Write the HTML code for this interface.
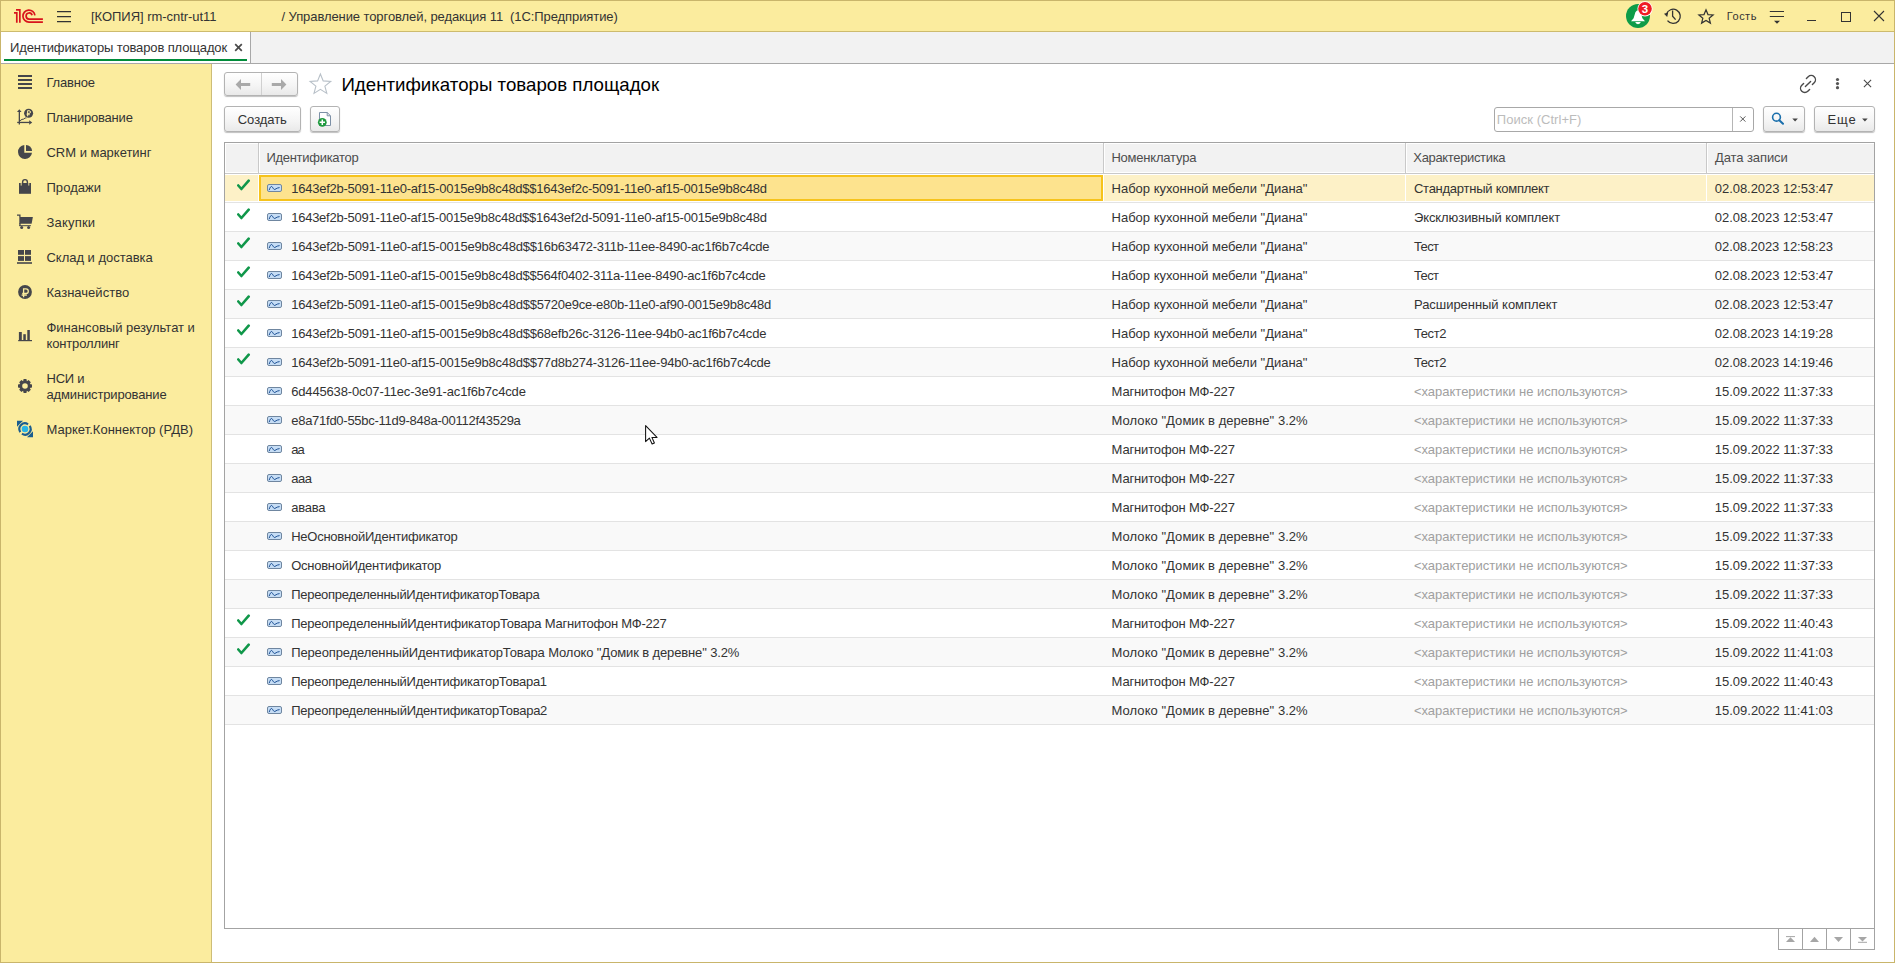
<!DOCTYPE html>
<html><head><meta charset="utf-8">
<style>
*{box-sizing:border-box}
html,body{margin:0;padding:0}
body{width:1895px;height:963px;overflow:hidden;position:relative;background:#fff;font-family:"Liberation Sans",sans-serif}
div,svg{position:absolute}
.tx{white-space:pre}
.gr{color:#a3a3a3}
.sb{font-size:13px;line-height:16px;color:#404040;white-space:pre;left:47px}
.rowline{left:225px;width:1649px;height:1px;background:#e3e3e3}
.rowbg{left:225px;width:1649px;height:28px}
.chk{left:237px}
.ric{left:267px}
.btn{border:1px solid #b3b3b3;border-radius:3px;background:linear-gradient(#ffffff,#f4f4f4 60%,#e9e9e9);box-shadow:0 1px 1px rgba(0,0,0,0.25)}
.hdr{top:144px;height:28px;background:#f2f2f2}
.vsep{top:143px;width:1px;height:31px;background:#c9c9c9}
</style></head><body>
<!-- top bar -->
<div style="left:0;top:0;width:1895px;height:32px;background:#fbec9e"></div>
<div style="left:0;top:31px;width:1895px;height:1px;background:#cdbb6e"></div>
<svg style="left:0;top:0" width="50" height="31" viewBox="0 0 50 31">
 <g fill="none" stroke="#d8141c" stroke-width="1.7">
  <path d="M16 9.8 H19.85 V22.8"/>
  <path d="M14 12.8 H16.8 V22.8"/>
  <path d="M34.9 15.3 A6 6 0 1 0 29 22.05 H42.9"/>
  <path d="M32.1 15.3 A3.05 3.05 0 1 0 29 19.05 H42.9"/>
 </g>
</svg>
<svg style="left:56px;top:9px" width="16" height="15" viewBox="0 0 16 15">
 <g stroke="#333" stroke-width="1.3"><path d="M1 2.7H15M1 7.7H15M1 12.7H15"/></g>
</svg>
<!-- bell -->
<svg style="left:1620px;top:0" width="40" height="31" viewBox="1620 0 40 31">
 <circle cx="1638" cy="16" r="12" fill="#0e9c48"/>
 <path d="M1631 21.2 L1633.6 18.2 L1635.4 12.2 Q1638 8.4 1640.6 12.2 L1642.4 18.2 L1645 21.2 Z" fill="#fff"/>
 <path d="M1635.2 22.1 H1640.8 Q1640.2 24.2 1638 24.2 Q1635.8 24.2 1635.2 22.1Z" fill="#fff"/>
 <circle cx="1645" cy="8.8" r="7.6" fill="#fff"/>
 <circle cx="1645" cy="8.8" r="6.8" fill="#ef1c25"/>
 <text x="1645" y="12.9" font-family="Liberation Sans" font-weight="bold" font-size="11.5" fill="#fff" text-anchor="middle">3</text>
</svg>
<!-- history -->
<svg style="left:1662px;top:6px" width="22" height="20" viewBox="0 0 22 20">
 <path d="M4.4 8.2 A7.1 7.1 0 1 1 5.5 14.6" fill="none" stroke="#333" stroke-width="1.3"/>
 <path d="M2 7.8 L6.2 6.6 L5.2 11 Z" fill="#333"/>
 <path d="M10.6 4.6 V10.2 L13.6 13.6" fill="none" stroke="#333" stroke-width="1.3"/>
</svg>
<!-- star top -->
<svg style="left:1696px;top:6px" width="20" height="20" viewBox="0 0 20 20">
 <path d="M10.00 3.80 L11.98 8.57 L17.11 8.93 L13.15 12.17 L14.41 17.12 L10.00 14.42 L5.59 17.12 L6.85 12.17 L2.89 8.93 L8.02 8.57 Z" fill="none" stroke="#333" stroke-width="1.2" stroke-linejoin="miter" stroke-miterlimit="3"/>
</svg>
<!-- filter -->
<svg style="left:1768px;top:8px" width="18" height="18" viewBox="0 0 18 18">
 <path d="M1.8 3.5H16M1.8 8.5H16" stroke="#333" stroke-width="1.1"/>
 <path d="M6 12.8H12L9 15.8Z" fill="#333"/>
</svg>
<!-- window controls -->
<div style="left:1807px;top:20px;width:9px;height:1.4px;background:#333"></div>
<div style="left:1841px;top:12px;width:10px;height:10px;border:1.2px solid #333"></div>
<svg style="left:1872px;top:9px" width="14" height="14" viewBox="0 0 14 14">
 <path d="M2 2L12 12M12 2L2 12" stroke="#333" stroke-width="1.1"/>
</svg>

<!-- tab bar -->
<div style="left:0;top:32px;width:1895px;height:31px;background:#f2f2f2"></div>
<div style="left:0;top:32px;width:250px;height:31px;background:#fff"></div>
<div style="left:250px;top:32px;width:1px;height:32px;background:#a8a8a8"></div>
<div style="left:0;top:63px;width:1895px;height:1px;background:#a8a8a8"></div>
<div style="left:4px;top:59px;width:243px;height:2px;background:#008c3a"></div>
<svg style="left:233px;top:42px" width="11" height="11" viewBox="0 0 11 11">
 <path d="M2.2 2.2L8.8 8.8M8.8 2.2L2.2 8.8" stroke="#4a4a4a" stroke-width="1.7"/>
</svg>

<!-- sidebar -->
<div style="left:0;top:64px;width:211px;height:899px;background:#fbec9e"></div>
<div style="left:211px;top:64px;width:1px;height:899px;background:#cdbd78"></div>
<svg style="left:0;top:64px" width="211" height="390" viewBox="0 64 211 390">
 <g fill="#45464b">
  <!-- Главное -->
  <rect x="18" y="75" width="14" height="2"/><rect x="18" y="79" width="14" height="2"/><rect x="18" y="83" width="14" height="2"/><rect x="18" y="87" width="14" height="2"/>
  <!-- Планирование -->
  <path d="M19.3 109.2 L21.6 112 H17 Z"/>
  <rect x="18.7" y="111" width="1.3" height="13.5"/>
  <rect x="17.2" y="121.8" width="12.5" height="1.3"/>
  <path d="M32.2 122.45 L29.2 120.2 V124.7 Z"/>
  <path d="M20 120.8 L22 119.3 L23.2 119.3 L25.2 118 L26.4 118" fill="none" stroke="#45464b" stroke-width="1"/>
  <circle cx="28.6" cy="113.3" r="4.5"/>
  <path d="M27.6 110.7 H29.1 A1.35 1.35 0 0 1 29.1 113.4 H26.8 M27.6 110.7 V116.3 M26.6 114.7 H29.8" fill="none" stroke="#fbec9e" stroke-width="1"/>
  <!-- CRM -->
  <path d="M24.3 145 A7 7 0 1 0 32 152.7 H24.3 Z"/>
  <path d="M26 144.9 A6.2 6.2 0 0 1 32.1 151 H26 Z"/>
  <!-- Продажи -->
  <rect x="19" y="183" width="12" height="10.8"/>
  <path d="M22.6 185.5 V182 A2.4 2.4 0 0 1 27.4 182 V185.5" fill="none" stroke="#45464b" stroke-width="1.4"/>
  <path d="M21.2 183 V185.6 M28.8 183 V185.6" stroke="#fbec9e" stroke-width="0.9"/>
  <!-- Закупки -->
  <path d="M17 215.2 H19.9 V217" fill="none" stroke="#45464b" stroke-width="1.3"/>
  <path d="M19.3 217 H32.9 L31.6 223.8 H19.3 Z"/>
  <rect x="19.3" y="223" width="1.3" height="3"/>
  <rect x="19.3" y="225.2" width="11.6" height="1"/>
  <circle cx="21.7" cy="227.6" r="1.5"/><circle cx="28.6" cy="227.6" r="1.5"/>
  <!-- Склад -->
  <rect x="18" y="250" width="6" height="4.8"/><rect x="25" y="250" width="6" height="4.8"/>
  <rect x="18" y="256.1" width="6" height="4.8"/><rect x="25" y="256.1" width="6" height="4.8"/>
  <rect x="17" y="262.2" width="15" height="1.6"/>
  <!-- Казначейство -->
  <circle cx="25" cy="292" r="6.9"/>
  <path d="M23.6 288.9 H26 A2.3 2.3 0 0 1 26 293.5 H22.2 M23.6 288.3 V297.2 M21.6 295.2 H26.9" fill="none" stroke="#fbec9e" stroke-width="1.3"/>
  <!-- Финансовый -->
  <rect x="18.9" y="332" width="2.9" height="8.5"/><rect x="23.3" y="334.2" width="2.5" height="6.3"/><rect x="27.3" y="330" width="2.5" height="10.5"/>
  <rect x="18.2" y="340" width="13.8" height="1.2"/>
  <!-- НСИ gear -->
  <path d="M23.6 379 H26.4 L26.9 381.2 L28.6 380.1 L30.8 382.3 L29.8 384 L32 384.6 V387.4 L29.8 388 L30.8 389.7 L28.6 391.9 L26.9 390.8 L26.4 393 H23.6 L23.1 390.8 L21.4 391.9 L19.2 389.7 L20.2 388 L18 387.4 V384.6 L20.2 384 L19.2 382.3 L21.4 380.1 L23.1 381.2 Z M25 383.2 A2.8 2.8 0 1 0 25 388.8 A2.8 2.8 0 1 0 25 383.2 Z" fill-rule="evenodd"/>
 </g>
 <!-- Маркет -->
 <g>
  <path d="M20.3 432.05 A5.6 5.6 0 0 1 28.05 424.3" fill="none" stroke="#1b5d8f" stroke-width="2.2"/>
  <path d="M29.7 425.95 A5.6 5.6 0 0 1 21.95 433.7" fill="none" stroke="#1b5d8f" stroke-width="2.2"/>
  <path d="M17 420.8 H23 L17 426.8 Z" fill="#1b5d8f"/>
  <path d="M33 437.2 H27 L33 431.2 Z" fill="#1b5d8f"/>
  <circle cx="25" cy="429" r="3.3" fill="#29b5e6"/>
 </g>
</svg>

<!-- content header -->
<div class="btn" style="left:224px;top:72px;width:74px;height:24px"></div>
<div style="left:261px;top:73px;width:1px;height:22px;background:#d0d0d0"></div>
<svg style="left:234px;top:77px" width="18" height="15" viewBox="0 0 18 15">
 <path d="M1.6 7.5 L7 2 V5.9 H16.2 V9.1 H7 V13 Z" fill="#a9a9a9"/>
</svg>
<svg style="left:270px;top:77px" width="18" height="15" viewBox="0 0 18 15">
 <path d="M16.4 7.5 L11 2 V5.9 H1.8 V9.1 H11 V13 Z" fill="#a9a9a9"/>
</svg>
<svg style="left:307px;top:71px" width="28" height="26" viewBox="0 0 28 26">
 <path d="M13.4 3 L16.2 9.9 L23.7 10.4 L17.9 15.1 L19.8 22.4 L13.4 18.4 L7 22.4 L8.9 15.1 L3.1 10.4 L10.6 9.9 Z" fill="none" stroke="#b8c0c8" stroke-width="1.1"/>
</svg>
<svg style="left:1798px;top:74px" width="20" height="20" viewBox="0 0 20 20">
 <g fill="none" stroke="#4a4a4a" stroke-width="1.4" stroke-linecap="round">
  <path d="M8.4 4.6 L10.2 2.8 A2.8 2.8 0 0 1 16.2 8.8 L14.4 10.6"/>
  <path d="M5.6 9.4 L3.8 11.2 A2.8 2.8 0 0 0 9.8 17.2 L11.6 15.4"/>
  <path d="M7.4 12.6 L12.6 7.4"/>
 </g>
</svg>
<svg style="left:1833px;top:75px" width="10" height="16" viewBox="0 0 10 16">
 <circle cx="4.5" cy="4.5" r="1.6" fill="#555"/><circle cx="4.5" cy="8.6" r="1.6" fill="#555"/><circle cx="4.5" cy="12.7" r="1.6" fill="#555"/>
</svg>
<svg style="left:1862px;top:78px" width="11" height="11" viewBox="0 0 11 11">
 <path d="M1.9 1.9L9.1 9.1M9.1 1.9L1.9 9.1" stroke="#4a4a4a" stroke-width="1.1"/>
</svg>

<!-- toolbar -->
<div class="btn" style="left:224px;top:106px;width:77px;height:26px"></div>
<div class="btn" style="left:310px;top:106px;width:30px;height:26px"></div>
<svg style="left:313px;top:109px" width="22" height="20" viewBox="313 109 22 20">
 <path d="M319.5 112.5 H327.2 L330.5 115.8 V125.5 H319.5 Z" fill="#fff" stroke="#7d90a6" stroke-width="1"/>
 <path d="M327.2 112.5 V115.8 H330.5" fill="none" stroke="#7d90a6" stroke-width="1"/>
 <circle cx="322.3" cy="122.3" r="4.4" fill="#1f9a3e"/>
 <path d="M322.3 119.6 V125 M319.6 122.3 H325" stroke="#fff" stroke-width="1.5"/>
</svg>
<div style="left:1494px;top:107px;width:260px;height:25px;border:1px solid #a8a8a8;border-radius:3px;background:#fff"></div>
<div style="left:1732px;top:108px;width:1px;height:23px;background:#b5b5b5"></div>
<svg style="left:1738px;top:114px" width="10" height="10" viewBox="0 0 10 10">
 <path d="M2.2 2.4L7.4 7.6M7.4 2.4L2.2 7.6" stroke="#555" stroke-width="1"/>
</svg>
<div class="btn" style="left:1763px;top:106px;width:42px;height:26px"></div>
<svg style="left:1769px;top:111px" width="18" height="16" viewBox="0 0 18 16">
 <circle cx="7.5" cy="6.2" r="3.9" fill="none" stroke="#1a6fac" stroke-width="1.6"/>
 <path d="M10.3 9.2 L14 12.8" stroke="#1a6fac" stroke-width="2" stroke-linecap="round"/>
</svg>
<svg style="left:1791px;top:117px" width="8" height="6" viewBox="0 0 8 6"><path d="M1.3 1.5H6.9L4.1 4.6Z" fill="#444"/></svg>
<div class="btn" style="left:1814px;top:106px;width:61px;height:26px"></div>
<svg style="left:1861px;top:117px" width="8" height="6" viewBox="0 0 8 6"><path d="M1.1 1.5H6.7L3.9 4.6Z" fill="#444"/></svg>

<!-- table -->
<div style="left:224px;top:142px;width:1651px;height:787px;border:1px solid #a3a3a3;background:#fff"></div>
<div class="hdr" style="left:226px;width:32px"></div>
<div class="hdr" style="left:260px;width:843px"></div>
<div class="hdr" style="left:1105px;width:300px"></div>
<div class="hdr" style="left:1407px;width:299px"></div>
<div class="hdr" style="left:1708px;width:166px"></div>
<div class="vsep" style="left:258px"></div>
<div class="vsep" style="left:1103px"></div>
<div class="vsep" style="left:1405px"></div>
<div class="vsep" style="left:1706px"></div>
<div style="left:225px;top:173px;width:1649px;height:1px;background:#c9c9c9"></div>
<!-- selected row -->
<style>
.rowsel{left:225px;width:1649px;height:26px;background:#fdf1c7}
.cellsel{left:259px;width:844px;height:26px;border:2px solid #f6c31c;background:#fde38e}
</style>
<div class="rowsel" style="top:175px"></div>
<div class="cellsel" style="top:175px"></div>
<div class="rowline" style="top:202px"></div>
<svg class="chk" style="top:179px" width="14" height="13" viewBox="0 0 14 13"><path d="M1.3 6.5 L4.4 10 L11.7 1.7" fill="none" stroke="#10974a" stroke-width="2.6" stroke-linecap="round" stroke-linejoin="round"/></svg>
<svg class="ric" style="top:184px" width="15" height="8" viewBox="0 0 15 8"><rect x="0.5" y="0.5" width="14" height="7" rx="1.5" fill="#c6ddf5" stroke="#6f86a0"/><path d="M2.3 5.7 C3 3.4 3.9 2.1 4.8 2.5 C5.6 3 6.5 5.7 7.7 5.5 C8.7 5.3 9.4 4.3 10.3 4.1 L12.2 3.7" fill="none" stroke="#1b4f94" stroke-width="1" stroke-linecap="round"/></svg>
<div class="rowline" style="top:231px"></div>
<svg class="chk" style="top:208px" width="14" height="13" viewBox="0 0 14 13"><path d="M1.3 6.5 L4.4 10 L11.7 1.7" fill="none" stroke="#10974a" stroke-width="2.6" stroke-linecap="round" stroke-linejoin="round"/></svg>
<svg class="ric" style="top:213px" width="15" height="8" viewBox="0 0 15 8"><rect x="0.5" y="0.5" width="14" height="7" rx="1.5" fill="#c6ddf5" stroke="#6f86a0"/><path d="M2.3 5.7 C3 3.4 3.9 2.1 4.8 2.5 C5.6 3 6.5 5.7 7.7 5.5 C8.7 5.3 9.4 4.3 10.3 4.1 L12.2 3.7" fill="none" stroke="#1b4f94" stroke-width="1" stroke-linecap="round"/></svg>
<div class="rowbg" style="top:232px;background:#f9f9f9"></div>
<div class="rowline" style="top:260px"></div>
<svg class="chk" style="top:237px" width="14" height="13" viewBox="0 0 14 13"><path d="M1.3 6.5 L4.4 10 L11.7 1.7" fill="none" stroke="#10974a" stroke-width="2.6" stroke-linecap="round" stroke-linejoin="round"/></svg>
<svg class="ric" style="top:242px" width="15" height="8" viewBox="0 0 15 8"><rect x="0.5" y="0.5" width="14" height="7" rx="1.5" fill="#c6ddf5" stroke="#6f86a0"/><path d="M2.3 5.7 C3 3.4 3.9 2.1 4.8 2.5 C5.6 3 6.5 5.7 7.7 5.5 C8.7 5.3 9.4 4.3 10.3 4.1 L12.2 3.7" fill="none" stroke="#1b4f94" stroke-width="1" stroke-linecap="round"/></svg>
<div class="rowline" style="top:289px"></div>
<svg class="chk" style="top:266px" width="14" height="13" viewBox="0 0 14 13"><path d="M1.3 6.5 L4.4 10 L11.7 1.7" fill="none" stroke="#10974a" stroke-width="2.6" stroke-linecap="round" stroke-linejoin="round"/></svg>
<svg class="ric" style="top:271px" width="15" height="8" viewBox="0 0 15 8"><rect x="0.5" y="0.5" width="14" height="7" rx="1.5" fill="#c6ddf5" stroke="#6f86a0"/><path d="M2.3 5.7 C3 3.4 3.9 2.1 4.8 2.5 C5.6 3 6.5 5.7 7.7 5.5 C8.7 5.3 9.4 4.3 10.3 4.1 L12.2 3.7" fill="none" stroke="#1b4f94" stroke-width="1" stroke-linecap="round"/></svg>
<div class="rowbg" style="top:290px;background:#f9f9f9"></div>
<div class="rowline" style="top:318px"></div>
<svg class="chk" style="top:295px" width="14" height="13" viewBox="0 0 14 13"><path d="M1.3 6.5 L4.4 10 L11.7 1.7" fill="none" stroke="#10974a" stroke-width="2.6" stroke-linecap="round" stroke-linejoin="round"/></svg>
<svg class="ric" style="top:300px" width="15" height="8" viewBox="0 0 15 8"><rect x="0.5" y="0.5" width="14" height="7" rx="1.5" fill="#c6ddf5" stroke="#6f86a0"/><path d="M2.3 5.7 C3 3.4 3.9 2.1 4.8 2.5 C5.6 3 6.5 5.7 7.7 5.5 C8.7 5.3 9.4 4.3 10.3 4.1 L12.2 3.7" fill="none" stroke="#1b4f94" stroke-width="1" stroke-linecap="round"/></svg>
<div class="rowline" style="top:347px"></div>
<svg class="chk" style="top:324px" width="14" height="13" viewBox="0 0 14 13"><path d="M1.3 6.5 L4.4 10 L11.7 1.7" fill="none" stroke="#10974a" stroke-width="2.6" stroke-linecap="round" stroke-linejoin="round"/></svg>
<svg class="ric" style="top:329px" width="15" height="8" viewBox="0 0 15 8"><rect x="0.5" y="0.5" width="14" height="7" rx="1.5" fill="#c6ddf5" stroke="#6f86a0"/><path d="M2.3 5.7 C3 3.4 3.9 2.1 4.8 2.5 C5.6 3 6.5 5.7 7.7 5.5 C8.7 5.3 9.4 4.3 10.3 4.1 L12.2 3.7" fill="none" stroke="#1b4f94" stroke-width="1" stroke-linecap="round"/></svg>
<div class="rowbg" style="top:348px;background:#f9f9f9"></div>
<div class="rowline" style="top:376px"></div>
<svg class="chk" style="top:353px" width="14" height="13" viewBox="0 0 14 13"><path d="M1.3 6.5 L4.4 10 L11.7 1.7" fill="none" stroke="#10974a" stroke-width="2.6" stroke-linecap="round" stroke-linejoin="round"/></svg>
<svg class="ric" style="top:358px" width="15" height="8" viewBox="0 0 15 8"><rect x="0.5" y="0.5" width="14" height="7" rx="1.5" fill="#c6ddf5" stroke="#6f86a0"/><path d="M2.3 5.7 C3 3.4 3.9 2.1 4.8 2.5 C5.6 3 6.5 5.7 7.7 5.5 C8.7 5.3 9.4 4.3 10.3 4.1 L12.2 3.7" fill="none" stroke="#1b4f94" stroke-width="1" stroke-linecap="round"/></svg>
<div class="rowline" style="top:405px"></div>
<svg class="ric" style="top:387px" width="15" height="8" viewBox="0 0 15 8"><rect x="0.5" y="0.5" width="14" height="7" rx="1.5" fill="#c6ddf5" stroke="#6f86a0"/><path d="M2.3 5.7 C3 3.4 3.9 2.1 4.8 2.5 C5.6 3 6.5 5.7 7.7 5.5 C8.7 5.3 9.4 4.3 10.3 4.1 L12.2 3.7" fill="none" stroke="#1b4f94" stroke-width="1" stroke-linecap="round"/></svg>
<div class="rowbg" style="top:406px;background:#f9f9f9"></div>
<div class="rowline" style="top:434px"></div>
<svg class="ric" style="top:416px" width="15" height="8" viewBox="0 0 15 8"><rect x="0.5" y="0.5" width="14" height="7" rx="1.5" fill="#c6ddf5" stroke="#6f86a0"/><path d="M2.3 5.7 C3 3.4 3.9 2.1 4.8 2.5 C5.6 3 6.5 5.7 7.7 5.5 C8.7 5.3 9.4 4.3 10.3 4.1 L12.2 3.7" fill="none" stroke="#1b4f94" stroke-width="1" stroke-linecap="round"/></svg>
<div class="rowline" style="top:463px"></div>
<svg class="ric" style="top:445px" width="15" height="8" viewBox="0 0 15 8"><rect x="0.5" y="0.5" width="14" height="7" rx="1.5" fill="#c6ddf5" stroke="#6f86a0"/><path d="M2.3 5.7 C3 3.4 3.9 2.1 4.8 2.5 C5.6 3 6.5 5.7 7.7 5.5 C8.7 5.3 9.4 4.3 10.3 4.1 L12.2 3.7" fill="none" stroke="#1b4f94" stroke-width="1" stroke-linecap="round"/></svg>
<div class="rowbg" style="top:464px;background:#f9f9f9"></div>
<div class="rowline" style="top:492px"></div>
<svg class="ric" style="top:474px" width="15" height="8" viewBox="0 0 15 8"><rect x="0.5" y="0.5" width="14" height="7" rx="1.5" fill="#c6ddf5" stroke="#6f86a0"/><path d="M2.3 5.7 C3 3.4 3.9 2.1 4.8 2.5 C5.6 3 6.5 5.7 7.7 5.5 C8.7 5.3 9.4 4.3 10.3 4.1 L12.2 3.7" fill="none" stroke="#1b4f94" stroke-width="1" stroke-linecap="round"/></svg>
<div class="rowline" style="top:521px"></div>
<svg class="ric" style="top:503px" width="15" height="8" viewBox="0 0 15 8"><rect x="0.5" y="0.5" width="14" height="7" rx="1.5" fill="#c6ddf5" stroke="#6f86a0"/><path d="M2.3 5.7 C3 3.4 3.9 2.1 4.8 2.5 C5.6 3 6.5 5.7 7.7 5.5 C8.7 5.3 9.4 4.3 10.3 4.1 L12.2 3.7" fill="none" stroke="#1b4f94" stroke-width="1" stroke-linecap="round"/></svg>
<div class="rowbg" style="top:522px;background:#f9f9f9"></div>
<div class="rowline" style="top:550px"></div>
<svg class="ric" style="top:532px" width="15" height="8" viewBox="0 0 15 8"><rect x="0.5" y="0.5" width="14" height="7" rx="1.5" fill="#c6ddf5" stroke="#6f86a0"/><path d="M2.3 5.7 C3 3.4 3.9 2.1 4.8 2.5 C5.6 3 6.5 5.7 7.7 5.5 C8.7 5.3 9.4 4.3 10.3 4.1 L12.2 3.7" fill="none" stroke="#1b4f94" stroke-width="1" stroke-linecap="round"/></svg>
<div class="rowline" style="top:579px"></div>
<svg class="ric" style="top:561px" width="15" height="8" viewBox="0 0 15 8"><rect x="0.5" y="0.5" width="14" height="7" rx="1.5" fill="#c6ddf5" stroke="#6f86a0"/><path d="M2.3 5.7 C3 3.4 3.9 2.1 4.8 2.5 C5.6 3 6.5 5.7 7.7 5.5 C8.7 5.3 9.4 4.3 10.3 4.1 L12.2 3.7" fill="none" stroke="#1b4f94" stroke-width="1" stroke-linecap="round"/></svg>
<div class="rowbg" style="top:580px;background:#f9f9f9"></div>
<div class="rowline" style="top:608px"></div>
<svg class="ric" style="top:590px" width="15" height="8" viewBox="0 0 15 8"><rect x="0.5" y="0.5" width="14" height="7" rx="1.5" fill="#c6ddf5" stroke="#6f86a0"/><path d="M2.3 5.7 C3 3.4 3.9 2.1 4.8 2.5 C5.6 3 6.5 5.7 7.7 5.5 C8.7 5.3 9.4 4.3 10.3 4.1 L12.2 3.7" fill="none" stroke="#1b4f94" stroke-width="1" stroke-linecap="round"/></svg>
<div class="rowline" style="top:637px"></div>
<svg class="chk" style="top:614px" width="14" height="13" viewBox="0 0 14 13"><path d="M1.3 6.5 L4.4 10 L11.7 1.7" fill="none" stroke="#10974a" stroke-width="2.6" stroke-linecap="round" stroke-linejoin="round"/></svg>
<svg class="ric" style="top:619px" width="15" height="8" viewBox="0 0 15 8"><rect x="0.5" y="0.5" width="14" height="7" rx="1.5" fill="#c6ddf5" stroke="#6f86a0"/><path d="M2.3 5.7 C3 3.4 3.9 2.1 4.8 2.5 C5.6 3 6.5 5.7 7.7 5.5 C8.7 5.3 9.4 4.3 10.3 4.1 L12.2 3.7" fill="none" stroke="#1b4f94" stroke-width="1" stroke-linecap="round"/></svg>
<div class="rowbg" style="top:638px;background:#f9f9f9"></div>
<div class="rowline" style="top:666px"></div>
<svg class="chk" style="top:643px" width="14" height="13" viewBox="0 0 14 13"><path d="M1.3 6.5 L4.4 10 L11.7 1.7" fill="none" stroke="#10974a" stroke-width="2.6" stroke-linecap="round" stroke-linejoin="round"/></svg>
<svg class="ric" style="top:648px" width="15" height="8" viewBox="0 0 15 8"><rect x="0.5" y="0.5" width="14" height="7" rx="1.5" fill="#c6ddf5" stroke="#6f86a0"/><path d="M2.3 5.7 C3 3.4 3.9 2.1 4.8 2.5 C5.6 3 6.5 5.7 7.7 5.5 C8.7 5.3 9.4 4.3 10.3 4.1 L12.2 3.7" fill="none" stroke="#1b4f94" stroke-width="1" stroke-linecap="round"/></svg>
<div class="rowline" style="top:695px"></div>
<svg class="ric" style="top:677px" width="15" height="8" viewBox="0 0 15 8"><rect x="0.5" y="0.5" width="14" height="7" rx="1.5" fill="#c6ddf5" stroke="#6f86a0"/><path d="M2.3 5.7 C3 3.4 3.9 2.1 4.8 2.5 C5.6 3 6.5 5.7 7.7 5.5 C8.7 5.3 9.4 4.3 10.3 4.1 L12.2 3.7" fill="none" stroke="#1b4f94" stroke-width="1" stroke-linecap="round"/></svg>
<div class="rowbg" style="top:696px;background:#f9f9f9"></div>
<div class="rowline" style="top:724px"></div>
<svg class="ric" style="top:706px" width="15" height="8" viewBox="0 0 15 8"><rect x="0.5" y="0.5" width="14" height="7" rx="1.5" fill="#c6ddf5" stroke="#6f86a0"/><path d="M2.3 5.7 C3 3.4 3.9 2.1 4.8 2.5 C5.6 3 6.5 5.7 7.7 5.5 C8.7 5.3 9.4 4.3 10.3 4.1 L12.2 3.7" fill="none" stroke="#1b4f94" stroke-width="1" stroke-linecap="round"/></svg>
<div style="left:258px;top:175px;width:1px;height:26px;background:#fff"></div>
<div style="left:1103px;top:175px;width:1px;height:26px;background:#fff"></div>
<div style="left:1405px;top:175px;width:1px;height:26px;background:#fff"></div>
<div style="left:1706px;top:175px;width:1px;height:26px;background:#fff"></div>

<!-- pager -->
<div style="left:1778px;top:928px;width:97px;height:22px;border:1px solid #a3a3a3;background:#fff"></div>
<div style="left:1802px;top:928px;width:1px;height:22px;background:#a3a3a3"></div>
<div style="left:1826px;top:928px;width:1px;height:22px;background:#a3a3a3"></div>
<div style="left:1850px;top:928px;width:1px;height:22px;background:#a3a3a3"></div>
<svg style="left:1778px;top:928px" width="97" height="22" viewBox="0 0 97 22">
 <g fill="#a6a6a6">
  <rect x="8" y="8.1" width="9" height="1"/><path d="M8 13.9 H17 L12.5 9.3 Z"/>
  <path d="M32 13.9 H41 L36.5 8.7 Z"/>
  <path d="M56 9 H65 L60.5 13.9 Z"/>
  <path d="M80 9 H89 L84.5 13.6 Z"/><rect x="80" y="13.8" width="9" height="1"/>
 </g>
</svg>

<div class="tx" style="left:91.05px;top:9px;font-size:13px;line-height:16px;color:#333333;letter-spacing:-0.042px">[КОПИЯ] rm-cntr-ut11</div>
<div class="tx" style="left:281.49px;top:9px;font-size:13px;line-height:16px;color:#333333;letter-spacing:-0.084px">/ Управление торговлей, редакция 11  (1С:Предприятие)</div>
<div class="tx" style="left:1726.87px;top:10px;font-size:11px;line-height:13px;color:#333333;letter-spacing:0.473px">Гость</div>
<div class="tx" style="left:10.09px;top:40px;font-size:13px;line-height:16px;color:#333333;letter-spacing:-0.134px">Идентификаторы товаров площадок</div>
<div class="tx" style="left:46.49px;top:75px;font-size:13px;line-height:16px;color:#333333;letter-spacing:-0.18px">Главное</div>
<div class="tx" style="left:46.49px;top:110px;font-size:13px;line-height:16px;color:#333333;letter-spacing:-0.213px">Планирование</div>
<div class="tx" style="left:46.49px;top:145px;font-size:13px;line-height:16px;color:#333333;letter-spacing:-0.018px">CRM и маркетинг</div>
<div class="tx" style="left:46.49px;top:180px;font-size:13px;line-height:16px;color:#333333;letter-spacing:0.044px">Продажи</div>
<div class="tx" style="left:46.49px;top:215px;font-size:13px;line-height:16px;color:#333333;letter-spacing:0.192px">Закупки</div>
<div class="tx" style="left:46.49px;top:250px;font-size:13px;line-height:16px;color:#333333;letter-spacing:-0.022px">Склад и доставка</div>
<div class="tx" style="left:46.49px;top:285px;font-size:13px;line-height:16px;color:#333333;letter-spacing:0.02px">Казначейство</div>
<div class="tx" style="left:46.49px;top:320px;font-size:13px;line-height:16px;color:#333333;letter-spacing:-0.024px">Финансовый результат и</div>
<div class="tx" style="left:46.49px;top:336px;font-size:13px;line-height:16px;color:#333333;letter-spacing:-0.141px">контроллинг</div>
<div class="tx" style="left:46.49px;top:371px;font-size:13px;line-height:16px;color:#333333;letter-spacing:-0.212px">НСИ и</div>
<div class="tx" style="left:46.49px;top:387px;font-size:13px;line-height:16px;color:#333333;letter-spacing:-0.149px">администрирование</div>
<div class="tx" style="left:46.49px;top:422px;font-size:13px;line-height:16px;color:#333333;letter-spacing:0.017px">Маркет.Коннектор (РДВ)</div>
<div class="tx" style="left:341.43px;top:74px;font-size:18.67px;line-height:22px;color:#000000;letter-spacing:0.014px">Идентификаторы товаров площадок</div>
<div class="tx" style="left:237.81px;top:112px;font-size:13px;line-height:16px;color:#333333;letter-spacing:-0.069px">Создать</div>
<div class="tx" style="left:1496.79px;top:112px;font-size:13px;line-height:16px;color:#bcbcbc;letter-spacing:0.041px">Поиск (Ctrl+F)</div>
<div class="tx" style="left:1827.59px;top:112px;font-size:13px;line-height:16px;color:#333333;letter-spacing:0.831px">Еще</div>
<div class="tx" style="left:266.39px;top:150px;font-size:13px;line-height:16px;color:#4d4d4d;letter-spacing:-0.281px">Идентификатор</div>
<div class="tx" style="left:1111.39px;top:150px;font-size:13px;line-height:16px;color:#4d4d4d;letter-spacing:-0.199px">Номенклатура</div>
<div class="tx" style="left:1413.34px;top:150px;font-size:13px;line-height:16px;color:#4d4d4d;letter-spacing:-0.343px">Характеристика</div>
<div class="tx" style="left:1715.07px;top:150px;font-size:13px;line-height:16px;color:#4d4d4d;letter-spacing:-0.097px">Дата записи</div>
<div class="tx" style="left:291.19px;top:181px;font-size:13px;line-height:16px;color:#333333;letter-spacing:-0.238px">1643ef2b-5091-11e0-af15-0015e9b8c48d$$1643ef2c-5091-11e0-af15-0015e9b8c48d</div>
<div class="tx" style="left:1111.59px;top:181px;font-size:13px;line-height:16px;color:#333333;letter-spacing:-0.006px">Набор кухонной мебели "Диана"</div>
<div class="tx" style="left:1413.94px;top:181px;font-size:13px;line-height:16px;color:#333333;letter-spacing:-0.251px">Стандартный комплект</div>
<div class="tx" style="left:1714.82px;top:181px;font-size:13px;line-height:16px;color:#333333;letter-spacing:-0.051px">02.08.2023 12:53:47</div>
<div class="tx" style="left:291.19px;top:210px;font-size:13px;line-height:16px;color:#333333;letter-spacing:-0.249px">1643ef2b-5091-11e0-af15-0015e9b8c48d$$1643ef2d-5091-11e0-af15-0015e9b8c48d</div>
<div class="tx" style="left:1111.59px;top:210px;font-size:13px;line-height:16px;color:#333333;letter-spacing:-0.006px">Набор кухонной мебели "Диана"</div>
<div class="tx" style="left:1413.94px;top:210px;font-size:13px;line-height:16px;color:#333333;letter-spacing:-0.088px">Эксклюзивный комплект</div>
<div class="tx" style="left:1714.82px;top:210px;font-size:13px;line-height:16px;color:#333333;letter-spacing:-0.051px">02.08.2023 12:53:47</div>
<div class="tx" style="left:291.19px;top:239px;font-size:13px;line-height:16px;color:#333333;letter-spacing:-0.23px">1643ef2b-5091-11e0-af15-0015e9b8c48d$$16b63472-311b-11ee-8490-ac1f6b7c4cde</div>
<div class="tx" style="left:1111.59px;top:239px;font-size:13px;line-height:16px;color:#333333;letter-spacing:-0.006px">Набор кухонной мебели "Диана"</div>
<div class="tx" style="left:1413.94px;top:239px;font-size:13px;line-height:16px;color:#333333;letter-spacing:-0.614px">Тест</div>
<div class="tx" style="left:1714.82px;top:239px;font-size:13px;line-height:16px;color:#333333;letter-spacing:-0.067px">02.08.2023 12:58:23</div>
<div class="tx" style="left:291.19px;top:268px;font-size:13px;line-height:16px;color:#333333;letter-spacing:-0.233px">1643ef2b-5091-11e0-af15-0015e9b8c48d$$564f0402-311a-11ee-8490-ac1f6b7c4cde</div>
<div class="tx" style="left:1111.59px;top:268px;font-size:13px;line-height:16px;color:#333333;letter-spacing:-0.006px">Набор кухонной мебели "Диана"</div>
<div class="tx" style="left:1413.94px;top:268px;font-size:13px;line-height:16px;color:#333333;letter-spacing:-0.614px">Тест</div>
<div class="tx" style="left:1714.82px;top:268px;font-size:13px;line-height:16px;color:#333333;letter-spacing:-0.051px">02.08.2023 12:53:47</div>
<div class="tx" style="left:291.19px;top:297px;font-size:13px;line-height:16px;color:#333333;letter-spacing:-0.229px">1643ef2b-5091-11e0-af15-0015e9b8c48d$$5720e9ce-e80b-11e0-af90-0015e9b8c48d</div>
<div class="tx" style="left:1111.59px;top:297px;font-size:13px;line-height:16px;color:#333333;letter-spacing:-0.006px">Набор кухонной мебели "Диана"</div>
<div class="tx" style="left:1413.94px;top:297px;font-size:13px;line-height:16px;color:#333333;letter-spacing:-0.043px">Расширенный комплект</div>
<div class="tx" style="left:1714.82px;top:297px;font-size:13px;line-height:16px;color:#333333;letter-spacing:-0.051px">02.08.2023 12:53:47</div>
<div class="tx" style="left:291.19px;top:326px;font-size:13px;line-height:16px;color:#333333;letter-spacing:-0.227px">1643ef2b-5091-11e0-af15-0015e9b8c48d$$68efb26c-3126-11ee-94b0-ac1f6b7c4cde</div>
<div class="tx" style="left:1111.59px;top:326px;font-size:13px;line-height:16px;color:#333333;letter-spacing:-0.006px">Набор кухонной мебели "Диана"</div>
<div class="tx" style="left:1413.94px;top:326px;font-size:13px;line-height:16px;color:#333333;letter-spacing:-0.389px">Тест2</div>
<div class="tx" style="left:1714.82px;top:326px;font-size:13px;line-height:16px;color:#333333;letter-spacing:-0.068px">02.08.2023 14:19:28</div>
<div class="tx" style="left:291.19px;top:355px;font-size:13px;line-height:16px;color:#333333;letter-spacing:-0.227px">1643ef2b-5091-11e0-af15-0015e9b8c48d$$77d8b274-3126-11ee-94b0-ac1f6b7c4cde</div>
<div class="tx" style="left:1111.59px;top:355px;font-size:13px;line-height:16px;color:#333333;letter-spacing:-0.006px">Набор кухонной мебели "Диана"</div>
<div class="tx" style="left:1413.94px;top:355px;font-size:13px;line-height:16px;color:#333333;letter-spacing:-0.389px">Тест2</div>
<div class="tx" style="left:1714.82px;top:355px;font-size:13px;line-height:16px;color:#333333;letter-spacing:-0.065px">02.08.2023 14:19:46</div>
<div class="tx" style="left:291.19px;top:384px;font-size:13px;line-height:16px;color:#333333;letter-spacing:-0.164px">6d445638-0c07-11ec-3e91-ac1f6b7c4cde</div>
<div class="tx" style="left:1111.59px;top:384px;font-size:13px;line-height:16px;color:#333333;letter-spacing:-0.152px">Магнитофон МФ-227</div>
<div class="tx" style="left:1413.94px;top:384px;font-size:13px;line-height:16px;color:#a0a0a0;letter-spacing:-0.011px">&lt;характеристики не используются&gt;</div>
<div class="tx" style="left:1714.82px;top:384px;font-size:13px;line-height:16px;color:#333333;letter-spacing:-0.011px">15.09.2022 11:37:33</div>
<div class="tx" style="left:291.19px;top:413px;font-size:13px;line-height:16px;color:#333333;letter-spacing:-0.261px">e8a71fd0-55bc-11d9-848a-00112f43529a</div>
<div class="tx" style="left:1111.59px;top:413px;font-size:13px;line-height:16px;color:#333333;letter-spacing:0.045px">Молоко "Домик в деревне" 3.2%</div>
<div class="tx" style="left:1413.94px;top:413px;font-size:13px;line-height:16px;color:#a0a0a0;letter-spacing:-0.011px">&lt;характеристики не используются&gt;</div>
<div class="tx" style="left:1714.82px;top:413px;font-size:13px;line-height:16px;color:#333333;letter-spacing:-0.011px">15.09.2022 11:37:33</div>
<div class="tx" style="left:291.19px;top:442px;font-size:13px;line-height:16px;color:#333333;letter-spacing:-0.933px">аа</div>
<div class="tx" style="left:1111.59px;top:442px;font-size:13px;line-height:16px;color:#333333;letter-spacing:-0.152px">Магнитофон МФ-227</div>
<div class="tx" style="left:1413.94px;top:442px;font-size:13px;line-height:16px;color:#a0a0a0;letter-spacing:-0.011px">&lt;характеристики не используются&gt;</div>
<div class="tx" style="left:1714.82px;top:442px;font-size:13px;line-height:16px;color:#333333;letter-spacing:-0.011px">15.09.2022 11:37:33</div>
<div class="tx" style="left:291.19px;top:471px;font-size:13px;line-height:16px;color:#333333;letter-spacing:-0.459px">ааа</div>
<div class="tx" style="left:1111.59px;top:471px;font-size:13px;line-height:16px;color:#333333;letter-spacing:-0.152px">Магнитофон МФ-227</div>
<div class="tx" style="left:1413.94px;top:471px;font-size:13px;line-height:16px;color:#a0a0a0;letter-spacing:-0.011px">&lt;характеристики не используются&gt;</div>
<div class="tx" style="left:1714.82px;top:471px;font-size:13px;line-height:16px;color:#333333;letter-spacing:-0.011px">15.09.2022 11:37:33</div>
<div class="tx" style="left:291.19px;top:500px;font-size:13px;line-height:16px;color:#333333;letter-spacing:-0.199px">авава</div>
<div class="tx" style="left:1111.59px;top:500px;font-size:13px;line-height:16px;color:#333333;letter-spacing:-0.152px">Магнитофон МФ-227</div>
<div class="tx" style="left:1413.94px;top:500px;font-size:13px;line-height:16px;color:#a0a0a0;letter-spacing:-0.011px">&lt;характеристики не используются&gt;</div>
<div class="tx" style="left:1714.82px;top:500px;font-size:13px;line-height:16px;color:#333333;letter-spacing:-0.011px">15.09.2022 11:37:33</div>
<div class="tx" style="left:291.19px;top:529px;font-size:13px;line-height:16px;color:#333333;letter-spacing:-0.245px">НеОсновнойИдентификатор</div>
<div class="tx" style="left:1111.59px;top:529px;font-size:13px;line-height:16px;color:#333333;letter-spacing:0.045px">Молоко "Домик в деревне" 3.2%</div>
<div class="tx" style="left:1413.94px;top:529px;font-size:13px;line-height:16px;color:#a0a0a0;letter-spacing:-0.011px">&lt;характеристики не используются&gt;</div>
<div class="tx" style="left:1714.82px;top:529px;font-size:13px;line-height:16px;color:#333333;letter-spacing:-0.011px">15.09.2022 11:37:33</div>
<div class="tx" style="left:291.19px;top:558px;font-size:13px;line-height:16px;color:#333333;letter-spacing:-0.26px">ОсновнойИдентификатор</div>
<div class="tx" style="left:1111.59px;top:558px;font-size:13px;line-height:16px;color:#333333;letter-spacing:0.045px">Молоко "Домик в деревне" 3.2%</div>
<div class="tx" style="left:1413.94px;top:558px;font-size:13px;line-height:16px;color:#a0a0a0;letter-spacing:-0.011px">&lt;характеристики не используются&gt;</div>
<div class="tx" style="left:1714.82px;top:558px;font-size:13px;line-height:16px;color:#333333;letter-spacing:-0.011px">15.09.2022 11:37:33</div>
<div class="tx" style="left:291.19px;top:587px;font-size:13px;line-height:16px;color:#333333;letter-spacing:-0.279px">ПереопределенныйИдентификаторТовара</div>
<div class="tx" style="left:1111.59px;top:587px;font-size:13px;line-height:16px;color:#333333;letter-spacing:0.045px">Молоко "Домик в деревне" 3.2%</div>
<div class="tx" style="left:1413.94px;top:587px;font-size:13px;line-height:16px;color:#a0a0a0;letter-spacing:-0.011px">&lt;характеристики не используются&gt;</div>
<div class="tx" style="left:1714.82px;top:587px;font-size:13px;line-height:16px;color:#333333;letter-spacing:-0.011px">15.09.2022 11:37:33</div>
<div class="tx" style="left:291.19px;top:616px;font-size:13px;line-height:16px;color:#333333;letter-spacing:-0.224px">ПереопределенныйИдентификаторТовара Магнитофон МФ-227</div>
<div class="tx" style="left:1111.59px;top:616px;font-size:13px;line-height:16px;color:#333333;letter-spacing:-0.152px">Магнитофон МФ-227</div>
<div class="tx" style="left:1413.94px;top:616px;font-size:13px;line-height:16px;color:#a0a0a0;letter-spacing:-0.011px">&lt;характеристики не используются&gt;</div>
<div class="tx" style="left:1714.82px;top:616px;font-size:13px;line-height:16px;color:#333333;letter-spacing:-0.011px">15.09.2022 11:40:43</div>
<div class="tx" style="left:291.19px;top:645px;font-size:13px;line-height:16px;color:#333333;letter-spacing:-0.127px">ПереопределенныйИдентификаторТовара Молоко "Домик в деревне" 3.2%</div>
<div class="tx" style="left:1111.59px;top:645px;font-size:13px;line-height:16px;color:#333333;letter-spacing:0.045px">Молоко "Домик в деревне" 3.2%</div>
<div class="tx" style="left:1413.94px;top:645px;font-size:13px;line-height:16px;color:#a0a0a0;letter-spacing:-0.011px">&lt;характеристики не используются&gt;</div>
<div class="tx" style="left:1714.82px;top:645px;font-size:13px;line-height:16px;color:#333333;letter-spacing:-0.011px">15.09.2022 11:41:03</div>
<div class="tx" style="left:291.19px;top:674px;font-size:13px;line-height:16px;color:#333333;letter-spacing:-0.265px">ПереопределенныйИдентификаторТовара1</div>
<div class="tx" style="left:1111.59px;top:674px;font-size:13px;line-height:16px;color:#333333;letter-spacing:-0.152px">Магнитофон МФ-227</div>
<div class="tx" style="left:1413.94px;top:674px;font-size:13px;line-height:16px;color:#a0a0a0;letter-spacing:-0.011px">&lt;характеристики не используются&gt;</div>
<div class="tx" style="left:1714.82px;top:674px;font-size:13px;line-height:16px;color:#333333;letter-spacing:-0.011px">15.09.2022 11:40:43</div>
<div class="tx" style="left:291.19px;top:703px;font-size:13px;line-height:16px;color:#333333;letter-spacing:-0.258px">ПереопределенныйИдентификаторТовара2</div>
<div class="tx" style="left:1111.59px;top:703px;font-size:13px;line-height:16px;color:#333333;letter-spacing:0.045px">Молоко "Домик в деревне" 3.2%</div>
<div class="tx" style="left:1413.94px;top:703px;font-size:13px;line-height:16px;color:#a0a0a0;letter-spacing:-0.011px">&lt;характеристики не используются&gt;</div>
<div class="tx" style="left:1714.82px;top:703px;font-size:13px;line-height:16px;color:#333333;letter-spacing:-0.011px">15.09.2022 11:41:03</div>
<!-- window border -->
<div style="left:0;top:0;width:1895px;height:1px;background:#c9b56b"></div>
<div style="left:0;top:0;width:1px;height:963px;background:#c9b56b"></div>
<div style="left:1894px;top:0;width:1px;height:963px;background:#c9b56b"></div>
<div style="left:0;top:962px;width:1895px;height:1px;background:#c9b56b"></div>
<!-- cursor -->
<svg style="left:645px;top:425px" width="15" height="21" viewBox="0 0 15 21">
 <path d="M0.6 0.6 V16.6 L4.4 13.1 L7.1 19 L9.4 18 L6.9 12.4 H12 Z" fill="#fff" stroke="#111" stroke-width="1.05" stroke-linejoin="round"/>
</svg>
</body></html>
